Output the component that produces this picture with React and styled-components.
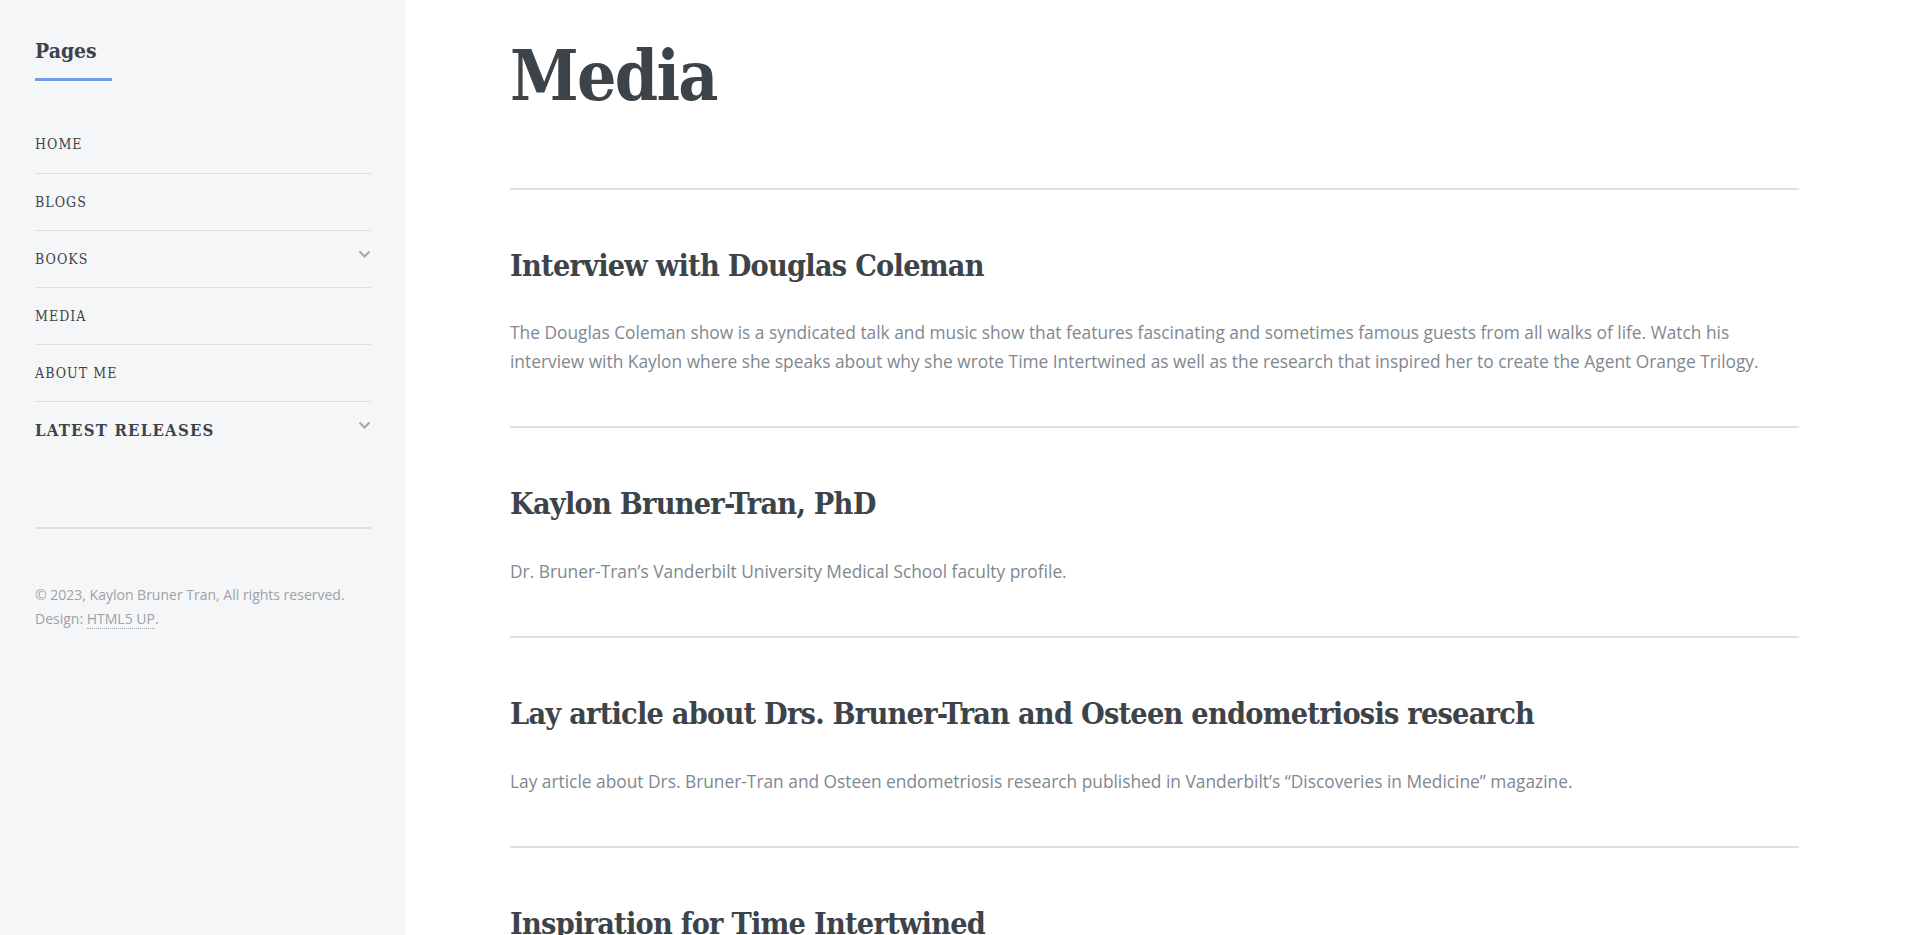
import React from 'react';
import styled, { createGlobalStyle } from 'styled-components';

const slab = `"DejaVu Serif Condensed", "DejaVu Serif", serif`;

const Global = createGlobalStyle`
html, body {
  margin: 0;
  padding: 0;
}
body {
  background: #ffffff;
  font-family: "Open Sans", "Liberation Sans", sans-serif;
  font-size: 17.33px;
  color: #7f888f;
}
* {
  box-sizing: border-box;
}
`

const Wrapper = styled.div`
display: flex;
min-height: 100vh;
`

const Sidebar = styled.div`
flex: 0 0 406px;
width: 406px;
background: #f5f6f7;
font-size: 15.6px;
`

const SideInner = styled.div`
padding: 35px;
`

const MenuHeader = styled.header`
width: 77px;
border-bottom: 3px solid #6c9ee6;
padding-bottom: 11px;
margin-bottom: 35px;
`

const SideTitle = styled.h2`
margin: 0;
font-family: ${slab};
font-weight: 700;
font-size: 21px;
line-height: 1.5;
color: #3d4449;
white-space: nowrap;
`

const MenuList = styled.ul`
list-style: none;
margin: 0;
padding: 0;
`

const MenuItem = styled.li`
display: flex;
align-items: center;
justify-content: space-between;
height: 57px;
border-top: ${p => p.first ? 'none' : '1px solid rgba(210, 215, 217, 0.75)'};
font-family: ${slab};
font-size: ${p => p.big ? '16.6px' : '14px'};
font-weight: ${p => p.big ? 700 : 400};
letter-spacing: 0.075em;
text-transform: uppercase;
color: #3d4449;
`

const Chevron = styled.svg`
width: 13px;
height: 8px;
margin-bottom: 10px;
flex: none;
`

const Rule = styled.hr`
border: 0;
border-top: 2px solid rgba(210, 215, 217, 0.75);
margin: 69px 0 54px 0;
`

const Copy = styled.p`
margin: 0;
font-size: 14px;
line-height: 24px;
color: #9da2a6;
`

const CopyLink = styled.a`
color: inherit;
text-decoration: none;
border-bottom: 1px dotted #9da2a6;
`

const Main = styled.div`
flex: 1 1 auto;
min-width: 0;
padding: 0 121px 0 104px;
`

const PageHeader = styled.header`
padding-top: 31px;
padding-bottom: 67px;
border-bottom: 2px solid rgba(210, 215, 217, 0.75);
`

const PageTitle = styled.h1`
margin: 0;
font-family: ${slab};
font-weight: 700;
font-size: 69px;
line-height: 1.3;
letter-spacing: -0.025em;
color: #3d4449;
`

const Section = styled.section`
padding: 53px 0 51px 0;
border-bottom: ${p => p.last ? 'none' : '2px solid rgba(210, 215, 217, 0.75)'};
`

const SectionTitle = styled.h2`
margin: 0 0 30px 0;
font-family: ${slab};
font-weight: 700;
font-size: 30.3px;
line-height: 1.5;
letter-spacing: -0.025em;
color: #3d4449;
`

const Text = styled.p`
margin: 0;
line-height: 1.65;
color: #7f888f;
`

const Arrow = () => (
  <Chevron viewBox="0 0 13 8">
    <polyline points="1.5,1.5 6.5,6.5 11.5,1.5" fill="none" stroke="#a3a8ac" strokeWidth="2" />
  </Chevron>
)

const pages = [
  { label: 'Home' },
  { label: 'Blogs' },
  { label: 'Books', sub: true },
  { label: 'Media' },
  { label: 'About Me' },
]

const media = [
  {
    title: 'Interview with Douglas Coleman',
    text: 'The Douglas Coleman show is a syndicated talk and music show that features fascinating and sometimes famous guests from all walks of life. Watch his interview with Kaylon where she speaks about why she wrote Time Intertwined as well as the research that inspired her to create the Agent Orange Trilogy.',
  },
  {
    title: 'Kaylon Bruner-Tran, PhD',
    text: 'Dr. Bruner-Tran\u2019s Vanderbilt University Medical School faculty profile.',
  },
  {
    title: 'Lay article about Drs. Bruner-Tran and Osteen endometriosis research',
    text: 'Lay article about Drs. Bruner-Tran and Osteen endometriosis research published in Vanderbilt\u2019s \u201cDiscoveries in Medicine\u201d magazine.',
  },
  {
    title: 'Inspiration for Time Intertwined',
  },
]

const App = () => {

  return (
    <Wrapper>
      <Global />
      <Sidebar>
        <SideInner>
          <MenuHeader>
            <SideTitle>Pages</SideTitle>
          </MenuHeader>
          <MenuList>
            {pages.map((p, i) => (
              <MenuItem key={p.label} first={i === 0}>
                {p.label}
                {p.sub && <Arrow />}
              </MenuItem>
            ))}
            <MenuItem big>
              Latest Releases
              <Arrow />
            </MenuItem>
          </MenuList>
          <Rule />
          <Copy>
            © 2023, Kaylon Bruner Tran, All rights reserved. Design: <CopyLink href="#">HTML5 UP</CopyLink>.
          </Copy>
        </SideInner>
      </Sidebar>

      <Main>
        <PageHeader>
          <PageTitle>Media</PageTitle>
        </PageHeader>
        {media.map((m, i) => (
          <Section key={m.title} last={i === media.length - 1}>
            <SectionTitle>{m.title}</SectionTitle>
            {m.text && <Text>{m.text}</Text>}
          </Section>
        ))}
      </Main>
    </Wrapper>
  )
}

export default App;
